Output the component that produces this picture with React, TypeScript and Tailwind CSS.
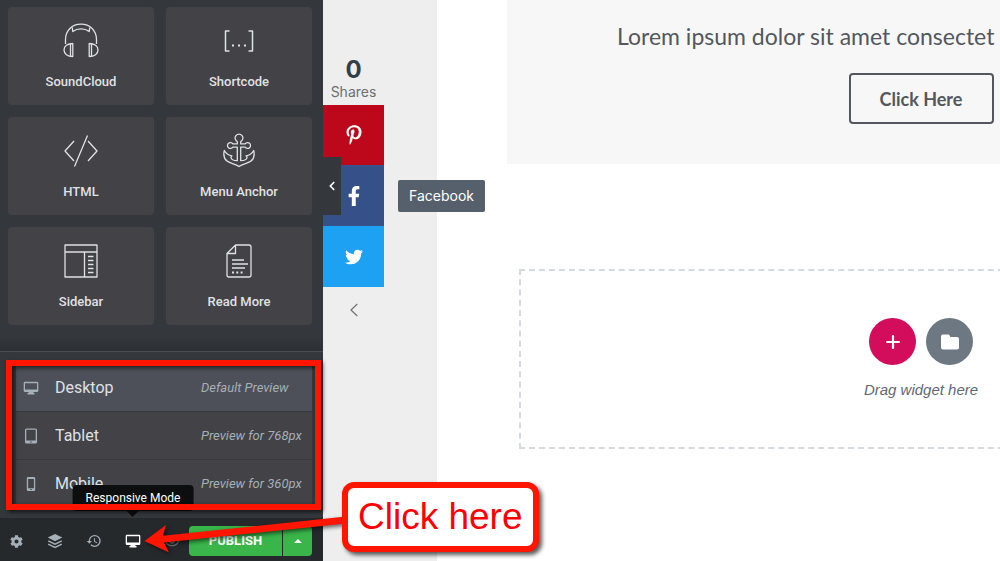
import React from 'react';
import { FaCog, FaFacebookF, FaPinterestP, FaTwitter } from 'react-icons/fa';
import { MdHistory } from 'react-icons/md';
import { ChevronLeft, Eye } from 'lucide-react';

const line = {
  fill: 'none',
  stroke: 'currentColor',
  strokeWidth: 1.3,
  strokeLinejoin: 'round' as const,
  'aria-hidden': true,
};

function HeadphonesIcon() {
  return (
    <svg viewBox="0 0 36 36" className="h-9 w-9" {...line}>
      <path d="M2.500 21v-4.300C2.500 7.500 9 1.200 18 1.200s15.500 6.300 15.500 15.500V21" />
      <path d="M9.200 4.300l.6 4.200C14.500 5 21.500 5 26.200 8.500l.6-4.200" />
      <path d="M9.800 20.500v13C4.500 33.500 1 30.800 1 27s3.500-6.500 8.800-6.500zM26.200 20.500v13c5.300 0 8.800-2.700 8.800-6.500s-3.500-6.500-8.800-6.500zM7.500 20.800v12.500M28.500 20.800v12.500" />
    </svg>
  );
}

function ShortcodeIcon() {
  return (
    <svg viewBox="0 0 36 36" className="h-9 w-9" {...line} strokeWidth={1.5}>
      <path d="M8.500 8H4.500v20h4M27.500 8h4v20h-4" />
      <path d="M11 22.500h2M17 22.500h2M23 22.500h2" strokeWidth={2} />
    </svg>
  );
}

function CodeIcon() {
  return (
    <svg viewBox="0 0 36 36" className="h-9 w-9" {...line}>
      <path d="M11 8L2 18l9 10M25 8l9 10-9 10M24.500 2.500l-13 31" />
    </svg>
  );
}

function AnchorIcon() {
  return (
    <svg viewBox="0 0 36 36" className="h-9 w-9" {...line}>
      <path d="M16.300 8.600a3.900 3.900 0 1 1 3.400 0v2.300h4.500a2.900 2.900 0 1 1 0 3.200h-4.500v13.600c3 0 6-1.200 6.300-3.200.2-1.300-1-1.700-1-1.700 3.500-.3 6-2.300 7.700-5.300 1 4 .4 8-2.700 10.600-2.600 2.300-8.500 2.700-12 5.400-3.500-2.700-9.400-3.100-12-5.400-3.100-2.600-3.700-6.600-2.700-10.600 1.700 3 4.200 5 7.700 5.300 0 0-1.200.4-1 1.700.3 2 3.300 3.200 6.300 3.200V14.100h-4.500a2.900 2.900 0 1 1 0-3.200h4.500z" />
    </svg>
  );
}

function SidebarIcon() {
  return (
    <svg viewBox="0 0 36 36" className="h-9 w-9" {...line}>
      <path d="M2 2h32v32H2zM2 9h32M21.500 9v25M25 13.500h5.500M25 17.500h5.500M25 21.500h5.500M25 25.500h5.500M25 29.500h5.500" />
    </svg>
  );
}

function ReadMoreIcon() {
  return (
    <svg viewBox="0 0 36 36" className="h-9 w-9" {...line}>
      <path d="M14.500 2H28a2 2 0 0 1 2 2v28a2 2 0 0 1-2 2H8a2 2 0 0 1-2-2V10.500zM14.500 2v8.500H6M11 17h12M11 21h16M11 25h13" />
      <path d="M11 29.500h2M15.300 29.500h2M19.600 29.500h2" strokeWidth={2} />
    </svg>
  );
}

function DesktopIcon() {
  return (
    <svg viewBox="0 0 16 16" className="h-4 w-4" fill="currentColor" aria-hidden="true">
      <path fillRule="evenodd" d="M2 1.800h12a1.300 1.300 0 0 1 1.300 1.300v7.600A1.300 1.300 0 0 1 14 12h-3.500v1h1v1.500h-7V13h1v-1H2a1.300 1.300 0 0 1-1.300-1.300V3.100A1.300 1.300 0 0 1 2 1.800zm0 1.400v6.300h12V3.200z" />
    </svg>
  );
}

function TabletIcon() {
  return (
    <svg viewBox="0 0 16 16" className="h-4 w-4" fill="currentColor" aria-hidden="true">
      <path fillRule="evenodd" d="M3.500.5h9A1.500 1.500 0 0 1 14 2v12a1.500 1.500 0 0 1-1.500 1.500h-9A1.500 1.500 0 0 1 2 14V2A1.500 1.500 0 0 1 3.500.5zM3.300 1.800v10.700h9.400V1.800zM7.300 13.400v1.200h1.400v-1.200z" />
    </svg>
  );
}

function MobileIcon() {
  return (
    <svg viewBox="0 0 16 16" className="h-4 w-4" fill="currentColor" aria-hidden="true">
      <path fillRule="evenodd" d="M5 1h6a1.200 1.200 0 0 1 1.200 1.200v11.600A1.200 1.200 0 0 1 11 15H5a1.200 1.200 0 0 1-1.200-1.200V2.200A1.200 1.200 0 0 1 5 1zm.1 1.900v9.300h5.800V2.900zM7.300 13v1.100h1.400V13z" />
    </svg>
  );
}

function LayersIcon() {
  return (
    <svg viewBox="0 0 16 16" className="h-4 w-4" fill="currentColor" aria-hidden="true">
      <path d="M8 1l7.300 3.600L8 8.200.7 4.600z" />
      <path d="M1.200 7.900L8 11.200l6.800-3.300M1.200 11.200L8 14.500l6.800-3.300" fill="none" stroke="currentColor" strokeWidth="1.500" />
    </svg>
  );
}

const widgets = [
  { label: 'SoundCloud', Icon: HeadphonesIcon },
  { label: 'Shortcode', Icon: ShortcodeIcon },
  { label: 'HTML', Icon: CodeIcon },
  { label: 'Menu Anchor', Icon: AnchorIcon },
  { label: 'Sidebar', Icon: SidebarIcon },
  { label: 'Read More', Icon: ReadMoreIcon },
];

const devices = [
  { label: 'Desktop', note: 'Default Preview', Icon: DesktopIcon, row: 'bg-[#4d5058]' },
  { label: 'Tablet', note: 'Preview for 768px', Icon: TabletIcon, row: 'bg-[#424247]' },
  { label: 'Mobile', note: 'Preview for 360px', Icon: MobileIcon, row: 'bg-[#424247]' },
];

function EditorPanel() {
  return (
    <aside className="relative z-10 flex w-[323px] shrink-0 flex-col bg-[#34383c] font-['Roboto',sans-serif]">
      <div className="grid grid-cols-2 gap-3 pt-[7px] pr-[11px] pl-2">
        {widgets.map(({ label, Icon }) => (
          <button
            key={label}
            type="button"
            className="flex h-[98px] flex-col items-center rounded-sm bg-[#424247] pt-4 text-[#e0e1e3]"
          >
            <Icon />
            <span className="mt-[13px] text-[13px] leading-5 font-medium">{label}</span>
          </button>
        ))}
      </div>

      <div className="mt-3 h-[14px] bg-linear-to-b from-transparent to-[#2c2f33]" />

      <div className="grow border-t border-[#4b4f54] pt-3 pr-[11px] pl-4">
        {devices.map(({ label, note, Icon, row }) => (
          <button
            key={label}
            type="button"
            className={`flex h-12 w-full items-center border-b border-[#36393e] pl-[7px] text-left text-[#a4afb7] ${row}`}
          >
            <Icon />
            <span className="ml-4 w-[146px] text-base text-[#dfe1e4]">{label}</span>
            <span className="text-[13px] whitespace-nowrap italic">{note}</span>
          </button>
        ))}
      </div>

      <footer className="mt-[10px] flex h-[43px] items-center bg-[#26292c] pt-[3px] pl-2 text-[#a4afb7]">
        <div className="flex items-center gap-[23px]">
          <button type="button" aria-label="Settings" className="flex w-4 justify-center">
            <FaCog className="h-[13px] w-[13px]" />
          </button>
          <button type="button" aria-label="Navigator" className="flex w-4 justify-center">
            <LayersIcon />
          </button>
          <button type="button" aria-label="History" className="flex w-4 justify-center">
            <MdHistory className="h-4 w-4 shrink-0" />
          </button>
          <button type="button" aria-label="Responsive Mode" className="relative flex w-4 justify-center text-white">
            <DesktopIcon />
            <span className="absolute bottom-[38px] left-1/2 -translate-x-1/2 rounded-sm bg-[#0d0e10] px-[13px] py-[3px] text-xs leading-5 whitespace-nowrap text-white">
              Responsive Mode
              <span className="absolute top-full left-1/2 -translate-x-1/2 border-x-[6px] border-t-[6px] border-x-transparent border-t-[#0d0e10]" />
            </span>
          </button>
          <button type="button" aria-label="Preview Changes" className="flex w-4 justify-center opacity-60">
            <Eye className="h-4 w-4" />
          </button>
        </div>
        <div className="ml-[9px] flex h-[30px] text-[13px] font-bold text-white">
          <button type="button" className="w-[93px] rounded-l-sm bg-[#39b54a]">
            PUBLISH
          </button>
          <button
            type="button"
            aria-label="Save options"
            className="ml-px flex w-[29px] items-center justify-center rounded-r-sm bg-[#39b54a]"
          >
            <span className="border-x-[4px] border-b-[4px] border-x-transparent border-b-white" />
          </button>
        </div>
      </footer>

      <button
        type="button"
        aria-label="Hide panel"
        className="absolute top-[157px] left-full flex h-[58px] w-[18px] items-center justify-center bg-[#34383c] text-white"
      >
        <ChevronLeft className="h-[14px] w-[14px]" strokeWidth={3} />
      </button>
    </aside>
  );
}

function ShareRail() {
  return (
    <div className="relative w-[114px] shrink-0 bg-[#eeeeee] font-['Inter',sans-serif]">
      <div className="flex w-[61px] flex-col items-center pt-[58px] text-white">
        <strong className="text-2xl leading-6 font-bold text-[#333f48]">0</strong>
        <span className="mb-[3px] text-sm leading-5 text-[#6d6e71]">Shares</span>
        <a href="#pinterest" aria-label="Pinterest" className="flex h-[60px] w-full items-center justify-center bg-[#bd081c]">
          <FaPinterestP className="h-5 w-5" />
        </a>
        <a href="#facebook" aria-label="Facebook" className="flex h-[61px] w-full items-center justify-center bg-[#365089]">
          <FaFacebookF className="h-5 w-5" />
        </a>
        <a href="#twitter" aria-label="Twitter" className="flex h-[61px] w-full items-center justify-center bg-[#1da1f2]">
          <FaTwitter className="h-[18px] w-[18px]" />
        </a>
        <button type="button" aria-label="Hide share buttons" className="mt-4 text-[#777777]">
          <svg viewBox="0 0 8 14" className="h-[14px] w-2" {...line}>
            <path d="M7.300 1L1 7l6.300 6" />
          </svg>
        </button>
      </div>
      <div className="absolute top-[180px] left-[75px] z-10 rounded-xs bg-[#56606c] px-[11px] py-[6px] text-sm leading-5 text-white">
        Facebook
      </div>
    </div>
  );
}

function Canvas() {
  return (
    <main className="min-w-0 grow overflow-hidden bg-white">
      <div className="ml-[70px] w-[828px]">
        <section className="flex h-[164px] flex-col items-center bg-[#f7f7f7] font-['Lato',sans-serif] text-[#54575d]">
          <p className="mt-5 w-full pl-[110px] text-[23px] leading-8 whitespace-nowrap">
            Lorem ipsum dolor sit amet consectet
          </p>
          <button type="button" className="mt-[21px] h-[51px] w-[145px] rounded-sm border-2 border-[#54575d] text-lg font-bold">
            Click Here
          </button>
        </section>

        <section className="mx-3 mt-[105px] flex h-[180px] flex-col items-center border-2 border-dashed border-[#d5dadf] pt-[47px]">
          <div className="flex gap-[10px]">
            <button
              type="button"
              aria-label="Add new section"
              className="flex h-[47px] w-[47px] items-center justify-center rounded-full bg-[#d30c5c] text-white"
            >
              <svg viewBox="0 0 14 14" className="h-[14px] w-[14px]" fill="none" stroke="currentColor" strokeWidth="2.200" strokeLinecap="round" aria-hidden="true">
                <path d="M7 1.100v11.800M1.100 7h11.800" />
              </svg>
            </button>
            <button
              type="button"
              aria-label="Add template"
              className="flex h-[47px] w-[47px] items-center justify-center rounded-full bg-[#6d7882] text-white"
            >
              <svg viewBox="0 0 18 16" className="h-4 w-[18px]" fill="currentColor" aria-hidden="true">
                <path d="M2 .5h5.200c.7 0 1.200.4 1.500 1l.6 1.500H16a2 2 0 0 1 2 2v8.500a2 2 0 0 1-2 2H2a2 2 0 0 1-2-2v-11a2 2 0 0 1 2-2z" />
              </svg>
            </button>
          </div>
          <p className="mt-[15px] font-['Liberation_Sans',sans-serif] text-[15px] leading-5 text-[#5f6972] italic">
            Drag widget here
          </p>
        </section>
      </div>
    </main>
  );
}

function Annotations() {
  return (
    <div className="pointer-events-none absolute inset-0 z-20">
      <div className="absolute top-[360px] left-[6px] h-[150px] w-[315px] border-6 border-[#ff1500] shadow-[2px_2px_4px_rgba(0,0,0,0.6),inset_2px_2px_4px_rgba(0,0,0,0.6)]" />
      <svg
        viewBox="0 0 210 50"
        className="absolute top-[512px] left-[140px] h-[50px] w-[210px] drop-shadow-[2px_2px_2px_rgba(0,0,0,0.6)]"
        fill="#ff1500"
        aria-hidden="true"
      >
        <path d="M4.500 29L26 13l-3 10.800L206 4.500v7L24 30.500 29 40.500z" />
      </svg>
      <div className="absolute top-[482px] left-[342px] rounded-xl border-6 border-[#ff1500] bg-white px-[10px] py-2 font-['Liberation_Sans',sans-serif] text-[37px] leading-[42px] whitespace-nowrap text-[#ff0000] shadow-[3px_3px_4px_rgba(0,0,0,0.65)]">
        Click here
      </div>
    </div>
  );
}

export default function App() {
  return (
    <div className="relative flex min-h-screen overflow-hidden">
      <EditorPanel />
      <ShareRail />
      <Canvas />
      <Annotations />
    </div>
  );
}
